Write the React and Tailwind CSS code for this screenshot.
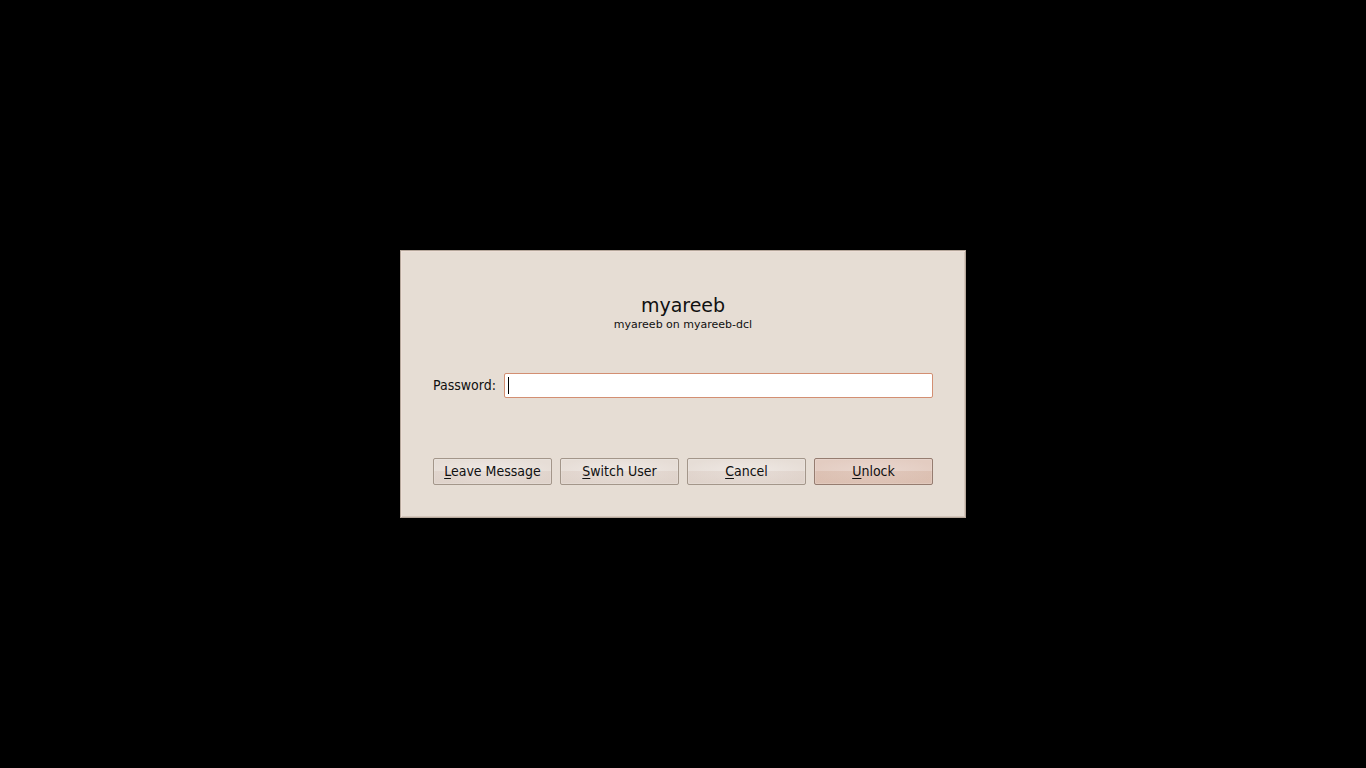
const plain =
  "border-[#a3968a] bg-[linear-gradient(to_bottom,transparent_50%,rgba(200,176,164,0.22)_50%),radial-gradient(ellipse_at_center,#efe9e5_0%,#e6ddd6_80%)]";
const primary =
  "border-[#957c70] bg-[linear-gradient(to_bottom,transparent_50%,rgba(196,152,128,0.24)_50%),radial-gradient(ellipse_at_center,#e9d7cf_0%,#e3ccc1_80%)]";

function ActionButton({ label, type = "button", tone = plain }) {
  return (
    <button
      type={type}
      className={`h-[27px] min-w-0 flex-1 rounded-xs border pb-0.5 text-center whitespace-nowrap shadow-[inset_0_0_0_1px_rgba(255,255,255,0.15)] ${tone}`}
    >
      <span className="underline decoration-1 underline-offset-2">{label[0]}</span>
      {label.slice(1)}
    </button>
  );
}

export default function App() {
  return (
    <main className="flex min-h-screen items-center justify-center bg-black font-['DejaVu_Sans_Condensed','DejaVu_Sans',sans-serif] text-sm leading-4 text-[#101010]">
      <form
        className="w-full max-w-[566px] border border-[#b5a79b] bg-[#e6ddd4] px-8 pt-[42px] pb-8 shadow-[inset_1px_1px_0_#eddfd7,inset_-1px_-1px_0_#d5c7bc]"
        onSubmit={(e) => e.preventDefault()}
      >
        <header className="text-center font-['DejaVu_Sans',sans-serif]">
          <h1 className="text-[19px] leading-6">myareeb</h1>
          <p className="text-[11px] leading-4">myareeb on myareeb-dcl</p>
        </header>
        <div className="mt-10 flex items-center">
          <label htmlFor="password" className="w-[71px] pb-0.5">
            Password:
          </label>
          <div className="relative flex min-w-0 flex-1">
            <input
              id="password"
              type="password"
              autoFocus
              className="peer h-[25px] w-full rounded-xs border border-[#d38f72] bg-white px-[3px] caret-transparent outline-none"
            />
            <span
              aria-hidden="true"
              className="pointer-events-none absolute inset-y-1 left-1 hidden w-px bg-black peer-focus:block"
            />
          </div>
        </div>
        <div className="mt-15 flex gap-2">
          <ActionButton label="Leave Message" />
          <ActionButton label="Switch User" />
          <ActionButton label="Cancel" />
          <ActionButton label="Unlock" type="submit" tone={primary} />
        </div>
      </form>
    </main>
  );
}
